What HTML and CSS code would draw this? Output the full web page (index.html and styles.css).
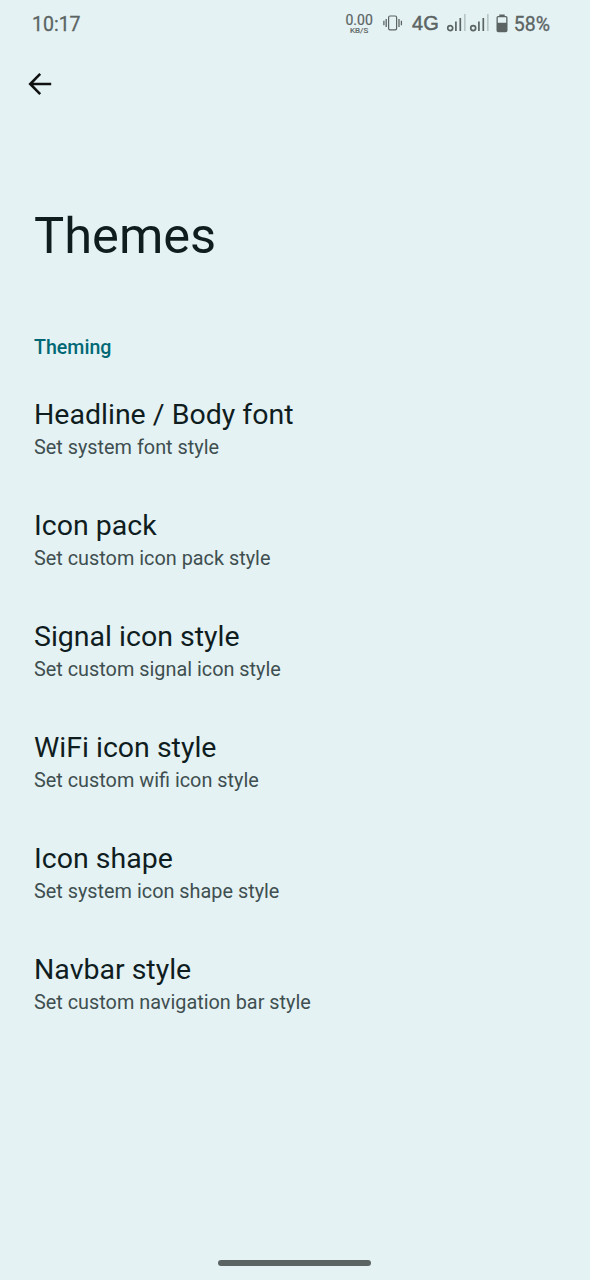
FILE: index.html
```html
<!DOCTYPE html>
<html lang="en">
<head>
<meta charset="utf-8">
<title>Themes</title>
<link rel="stylesheet" href="styles.css">
</head>
<body>
<main class="screen">
  <header class="status">
    <span class="clock">10:17</span>
    <span class="speed"><span class="rate">0.00</span><span class="unit">KB/S</span></span>
    <svg class="vibrate" viewBox="0 0 20 16" width="20" height="16">
      <rect x="5.6" y="1" width="8" height="13.8" rx="1.4" fill="none" stroke="currentColor" stroke-width="1.2"/>
      <path d="M3.2 4v8M0.9 5.8v4.4M16 4v8M18.4 5.8v4.4" stroke="currentColor" stroke-width="1.3"/>
    </svg>
    <span class="network">4G</span>
    <svg class="signals" viewBox="0 0 43 18" width="43" height="18">
      <g fill="none" stroke="currentColor" stroke-width="1.7">
        <circle cx="3.2" cy="14.1" r="2.5"/><path d="M8.9 7.5V17M13.3 4V17"/>
        <path d="M17.8 0V17" opacity=".3"/>
        <circle cx="26.2" cy="14.1" r="2.5"/><path d="M31.9 7.5V17M36.3 4V17"/>
        <path d="M40.8 0V17" opacity=".3"/>
      </g>
    </svg>
    <svg class="battery" viewBox="0 0 12 19" width="12" height="19">
      <path d="M3.3 0.4h5.4v1.6h1.2q1.6 0 1.6 1.6v12.8q0 1.8-1.8 1.8H2.3q-1.8 0-1.8-1.8V3.6q0-1.6 1.6-1.6h1.2zM1.8 3.3v5.5h8.4V3.3z" fill="currentColor" fill-rule="evenodd"/>
    </svg>
    <span class="percent">58%</span>
  </header>
  <nav class="toolbar">
    <svg viewBox="0 0 24 24" width="24" height="24">
      <path d="M23.2 12H2.5M12.2 1.8L2.2 12l10 10.2" fill="none" stroke="currentColor" stroke-width="2.6"/>
    </svg>
  </nav>
  <h1 class="heading">Themes</h1>
  <h2 class="category">Theming</h2>
  <section class="preferences">
    <div class="preference"><div class="title">Headline / Body font</div><div class="summary">Set system font style</div></div>
    <div class="preference"><div class="title">Icon pack</div><div class="summary">Set custom icon pack style</div></div>
    <div class="preference"><div class="title">Signal icon style</div><div class="summary">Set custom signal icon style</div></div>
    <div class="preference"><div class="title">WiFi icon style</div><div class="summary">Set custom wifi icon style</div></div>
    <div class="preference"><div class="title">Icon shape</div><div class="summary">Set system icon shape style</div></div>
    <div class="preference"><div class="title">Navbar style</div><div class="summary">Set custom navigation bar style</div></div>
  </section>
  <footer class="gesture"><div class="handle"></div></footer>
</main>
</body>
</html>
```
FILE: styles.css
```css
* { box-sizing: border-box; }
body { margin: 0; background: #e4f2f4; font-family: Roboto, sans-serif; color: #101d1f; }
.screen { display: flex; flex-direction: column; width: 590px; height: 1280px; overflow: hidden; }
.status { display: flex; align-items: center; height: 48px; padding: 0 40px 0 32px; color: #5b6463; white-space: nowrap; }
.clock { font-size: 19.5px; font-weight: 400; -webkit-text-stroke: 0.3px currentColor; margin-right: auto; }
.speed { display: flex; flex-direction: column; align-items: center; width: 28px; margin-right: 10px; }
.rate { font-size: 14px; line-height: 13px; font-weight: 400; -webkit-text-stroke: 0.2px currentColor; }
.unit { font-size: 8px; line-height: 8px; font-weight: 400; -webkit-text-stroke: 0.2px currentColor; }
.vibrate { margin-right: 9px; margin-top: -3px; }
.network { font-family: "Liberation Sans", sans-serif; font-size: 20px; -webkit-text-stroke: 0.5px currentColor; margin-right: 8px; margin-top: -2px; }
.signals { margin-right: 6.5px; margin-top: -2px; }
.battery { margin-right: 5.5px; margin-top: -2px; }
.percent { font-size: 19.5px; font-weight: 400; -webkit-text-stroke: 0.3px currentColor; }
.toolbar { height: 72px; padding: 24px 0 0 28px; color: #111; }
.toolbar svg { display: block; }
.heading { margin: 86px 0 0 34px; font-size: 50.6px; line-height: 60px; font-weight: 400; }
.category { margin: 69px 0 0 34px; font-size: 19.6px; line-height: 26px; font-weight: 500; color: #006874; }
.preferences { display: flex; flex-direction: column; padding: 37px 0 0 34px; }
.preference { height: 111px; }
.title { font-size: 28.5px; line-height: 34px; }
.summary { font-size: 19.85px; line-height: 26px; margin-top: 3px; color: #3f4f50; }
.gesture { display: flex; justify-content: center; margin-top: auto; padding: 0 1px 14px 0; }
.handle { width: 153px; height: 6px; border-radius: 3px; background: #5b6463; }
```
